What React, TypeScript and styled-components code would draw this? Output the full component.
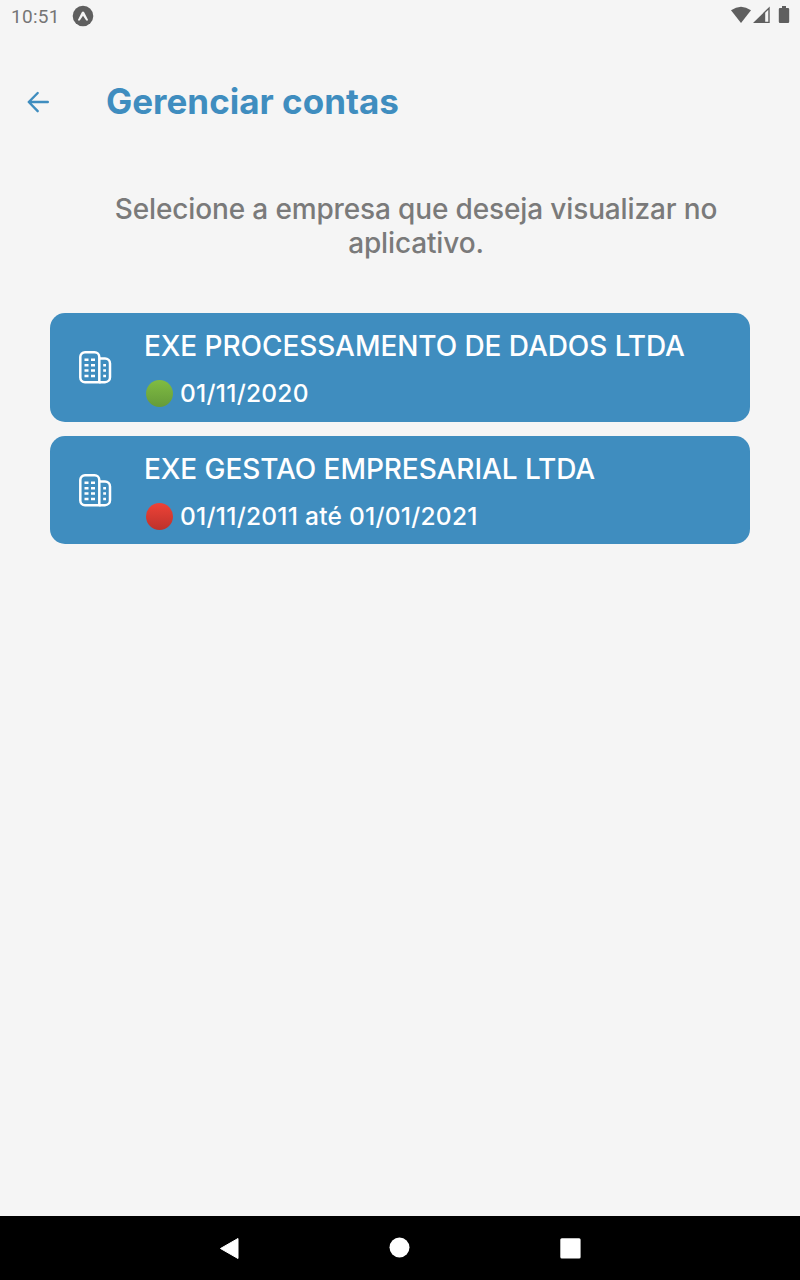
import React from 'react';
import styled, { createGlobalStyle } from 'styled-components';

const GlobalStyle = createGlobalStyle`
  * { box-sizing: border-box; }
  body { margin: 0; background: #f5f5f5; font-family: Inter, Roboto, sans-serif; }
`;

const Screen = styled.div`
  display: flex;
  flex-direction: column;
  width: 800px;
  height: 1280px;
  background: #f5f5f5;
`;

const StatusBar = styled.div`
  display: flex;
  align-items: center;
  height: 32px;
  padding: 0 10px 0 11px;
  color: #5f5f5f;
`;

const Clock = styled.span`
  font: 400 19px/32px Roboto, sans-serif;
  letter-spacing: 0.3px;
  width: 61px;
  padding-top: 1px;
  color: #757575;
`;

const StatusIcons = styled.div`
  display: flex;
  margin-left: auto;
`;

const Header = styled.header`
  display: flex;
  align-items: center;
  height: 60px;
  margin-top: 41px;
  padding-left: 24px;
  color: #3f8dbf;
`;

const BackButton = styled.button`
  display: flex;
  width: 82px;
  padding: 0;
  border: 0;
  background: none;
  color: inherit;
`;

const Title = styled.h1`
  margin: 0 0 5px;
  font-size: 35px;
  line-height: 44px;
  font-weight: 700;
`;

const Content = styled.main`
  flex: 1;
  padding: 59px 50px 0;
`;

const Prompt = styled.p`
  margin: 0 0 53px;
  padding: 0 30px 0 62px;
  font-size: 28px;
  line-height: 34px;
  font-weight: 500;
  letter-spacing: -0.14px;
  text-align: center;
  color: #7a7a7a;
`;

const CompanyList = styled.div`
  display: flex;
  flex-direction: column;
  gap: 14.2px;
`;

const CompanyCard = styled.div`
  display: flex;
  align-items: center;
  height: 108.6px;
  padding-left: 28px;
  border-radius: 15px;
  background: #3f8dbf;
  color: #fff;
`;

const CompanyInfo = styled.div`
  margin: 3px 0 0 32px;
`;

const CompanyName = styled.div`
  font-size: 28px;
  line-height: 34px;
  font-weight: 500;
  letter-spacing: -0.07px;
`;

const Period = styled.div`
  display: flex;
  align-items: center;
  gap: 7.5px;
  margin: 15px 0 0 1.5px;
  font-size: 24.5px;
  line-height: 30px;
  font-weight: 500;
  letter-spacing: 0.25px;
`;

const StatusDot = styled.span<{ $active: boolean }>`
  width: 27px;
  height: 27px;
  border-radius: 50%;
  background: ${({ $active }) =>
    $active
      ? 'linear-gradient(#80bc42, #659b39)'
      : 'linear-gradient(#ee4237, #bd322b)'};
`;

const NavBar = styled.nav`
  display: flex;
  align-items: center;
  justify-content: center;
  gap: 147px;
  height: 64px;
  background: #000;
`;

const BuildingIcon = () => (
  <svg width="34" height="34" viewBox="0 0 34 34" fill="none" stroke="currentColor" strokeWidth="2.5">
    <path d="M21.3 32.2H7a4.7 4.7 0 0 1-4.7-4.7V7A4.7 4.7 0 0 1 7 2.3h9.6A4.7 4.7 0 0 1 21.3 7Z" />
    <path d="M21.3 8.4h5.7a5 5 0 0 1 5 5v13.8a5 5 0 0 1-5 5H21.3" />
    <path d="M6.5 9.7h4M13 9.7h4M6.5 15.2h4M13 15.2h4M6.5 20.6h4M13 20.6h4M6.5 26h4M13 26h4" />
    <path d="M25.2 15.2h2.8M25.2 20.6h2.8M25.2 26h2.8" />
  </svg>
);

const companies = [
  { name: 'EXE PROCESSAMENTO DE DADOS LTDA', period: '01/11/2020', active: true },
  { name: 'EXE GESTAO EMPRESARIAL LTDA', period: '01/11/2011 até 01/01/2021', active: false },
];

export default function App() {
  return (
    <Screen>
      <GlobalStyle />
      <StatusBar>
        <Clock>10:51</Clock>
        <svg width="22" height="22" viewBox="0 0 22 22">
          <circle cx="11" cy="11" r="10.3" fill="#5f5f5f" />
          <path d="M5.9 15 9.8 7.2Q11 5.6 12.2 7.2L16.1 15Q15 16.3 13.9 15L11 10.7 8.1 15Q7 16.3 5.9 15Z" fill="#f5f5f5" />
        </svg>
        <StatusIcons>
          <svg width="60" height="24" viewBox="730 4 60 24" fill="#5f5f5f">
            <path d="M731 10.2Q741 3.2 751 10.2L741 23Z" />
            <path fillRule="evenodd" d="M753 23 769.7 6.5V23ZM765.2 12.8V21.7H768.3V9.8Z" />
            <path d="M782 6h4v2h2q1.2 0 1.2 1.2v12.6q0 1.2-1.2 1.2h-8q-1.2 0-1.2-1.2V9.2q0-1.2 1.2-1.2h2Z" />
          </svg>
        </StatusIcons>
      </StatusBar>
      <Header>
        <BackButton aria-label="Voltar">
          <svg width="28" height="28" viewBox="0 0 28 28" fill="none" stroke="currentColor" strokeWidth="2.4" strokeLinecap="round" strokeLinejoin="round">
            <path d="M23.8 13H4.8M13.7 4 4.8 13l8.9 9.2" />
          </svg>
        </BackButton>
        <Title>Gerenciar contas</Title>
      </Header>
      <Content>
        <Prompt>Selecione a empresa que deseja visualizar no aplicativo.</Prompt>
        <CompanyList>
          {companies.map((company) => (
            <CompanyCard key={company.name}>
              <BuildingIcon />
              <CompanyInfo>
                <CompanyName>{company.name}</CompanyName>
                <Period>
                  <StatusDot $active={company.active} />
                  {company.period}
                </Period>
              </CompanyInfo>
            </CompanyCard>
          ))}
        </CompanyList>
      </Content>
      <NavBar>
        <svg width="24" height="24" viewBox="0 0 24 24" fill="#fff" stroke="#fff" strokeLinejoin="round">
          <path d="M3.5 12.5 21 2.5v20Z" />
        </svg>
        <svg width="24" height="24" viewBox="0 0 24 24" fill="#fff">
          <circle cx="11.5" cy="11.5" r="10" />
        </svg>
        <svg width="24" height="24" viewBox="0 0 24 24" fill="#fff">
          <rect x="1.3" y="2.3" width="20.3" height="20.3" rx="1.5" />
        </svg>
      </NavBar>
    </Screen>
  );
}
